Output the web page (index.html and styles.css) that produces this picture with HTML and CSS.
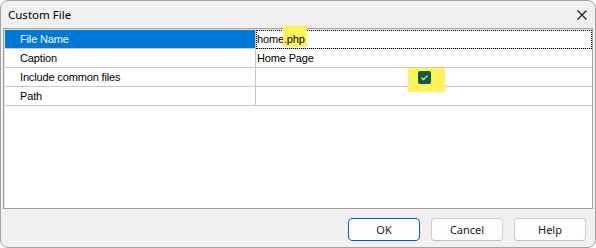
FILE: index.html
```html
<!DOCTYPE html>
<html lang="en">
<head>
    <meta charset="UTF-8">
    <title>Custom File</title>
    <link rel="stylesheet" href="styles.css">
</head>
<body>
    <div class="dialog">
        <div class="titlebar">
            <span class="title">Custom File</span>
            <svg class="close" width="10" height="10" viewBox="0 0 10 10">
                <path d="M0.5 0.5 L9.5 9.5 M9.5 0.5 L0.5 9.5" stroke="#1a1a1a" stroke-width="1.1" fill="none"/>
            </svg>
        </div>
        <div class="grid">
            <div class="row selected">
                <div class="name">File Name</div>
                <div class="value focus"><span class="txt">home<span class="mark">.php</span></span></div>
            </div>
            <div class="row">
                <div class="name">Caption</div>
                <div class="value">Home Page</div>
            </div>
            <div class="row">
                <div class="name">Include common files</div>
                <div class="value center">
                    <span class="check">
                        <svg width="13" height="13" viewBox="0 0 13 13">
                            <rect x="0" y="0" width="13" height="13" rx="2" fill="#0d5b40"/>
                            <path d="M3.5 6.8 L5.5 8.7 L9.6 4.6" stroke="#e6ec9c" stroke-width="1.2" fill="none"/>
                        </svg>
                    </span>
                </div>
            </div>
            <div class="row">
                <div class="name">Path</div>
                <div class="value"></div>
            </div>
        </div>
        <div class="footer">
            <button class="btn default">OK</button>
            <button class="btn">Cancel</button>
            <button class="btn">Help</button>
        </div>
    </div>
</body>
</html>
```

FILE: styles.css
```css
body {
    margin: 0;
    padding: 0;
    background: #fff;
}
.dialog {
    width: 596px;
    height: 248px;
    box-sizing: border-box;
    border: 1px solid #a3a3a3;
    border-radius: 8px;
    background: #f0f0f0;
    display: flex;
    flex-direction: column;
    overflow: hidden;
}
.titlebar {
    height: 27px;
    display: flex;
    align-items: center;
    justify-content: space-between;
    padding: 0 8px 0 7px;
    font-family: "Noto Sans", sans-serif;
    font-size: 11.5px;
    color: #000;
}
.close {
    display: block;
}
.grid {
    height: 181px;
    box-sizing: border-box;
    margin: 0 2px;
    border: 1px solid #a0a0a0;
    background: #fff;
    padding: 1px 0 0 1px;
    box-shadow: inset 1px 1px 0 #e3e3e3;
    font-family: "Liberation Sans", Arial, sans-serif;
    font-size: 11px;
    letter-spacing: -0.15px;
    color: #000;
}
.row {
    display: grid;
    grid-template-columns: 250px 1fr;
    height: 19px;
    box-sizing: border-box;
    border-bottom: 1px solid #c8c8c8;
    line-height: 18px;
}
.name {
    padding-left: 15px;
    white-space: nowrap;
}
.selected .name {
    background: #0078d7;
    color: #fff;
}
.value {
    border-left: 1px solid #c8c8c8;
    padding-left: 1px;
    position: relative;
}
.focus::after {
    content: "";
    position: absolute;
    left: 0;
    top: 0;
    right: 0;
    bottom: -1px;
    border: 1px dotted #000;
}
.mark {
    position: relative;
    z-index: 1;
}
.mark::before {
    content: "";
    position: absolute;
    left: -1px;
    right: -2px;
    top: -7px;
    bottom: -2px;
    background: #fff35a;
    z-index: -1;
}
.center {
    display: flex;
    justify-content: center;
    align-items: center;
}
.check {
    position: relative;
    z-index: 1;
    width: 13px;
    height: 13px;
}
.check svg {
    display: block;
}
.check::before {
    content: "";
    position: absolute;
    left: -10px;
    right: -14px;
    top: -3px;
    bottom: -8px;
    background: #fff35a;
    z-index: -1;
}
.footer {
    flex: 1;
    display: flex;
    justify-content: flex-end;
    gap: 11px;
    padding: 9px 9px 0 0;
}
.btn {
    width: 72px;
    height: 23px;
    box-sizing: border-box;
    border: 1px solid #d0d0d0;
    border-bottom-color: #c0c0c0;
    border-radius: 4px;
    background: #fdfdfd;
    font-family: "Noto Sans", sans-serif;
    font-size: 11px;
    color: #1a1a1a;
    padding: 0;
}
.btn.default {
    border-color: #005fb8;
}
```
